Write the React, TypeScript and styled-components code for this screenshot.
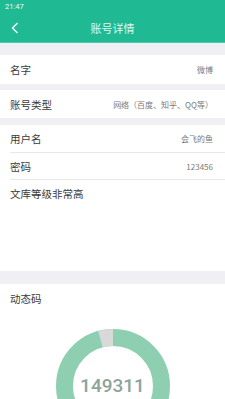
import React from "react";
import styled, { createGlobalStyle } from "styled-components";

const Global = createGlobalStyle`
  html, body { margin: 0; padding: 0; background: #efeff4; }
  body { font-family: Roboto, "Noto Sans CJK SC", sans-serif; width: 225px; height: 399px; overflow: hidden; }
`;

const Page = styled.div`
  display: flex;
  flex-direction: column;
  width: 225px;
  height: 399px;
  background: #efeff4;
  overflow: hidden;
`;

const Top = styled.div`
  background: #1fb994;
  border-bottom: 1px solid #4cc9a9;
`;

const StatusBar = styled.div`
  height: 13px;
  display: flex;
  align-items: center;
  padding-left: 5px;
  color: #e8fff7;
  font-size: 7.5px;
`;

const NavBar = styled.div`
  height: 29px;
  display: flex;
  align-items: center;
  position: relative;
  justify-content: center;
  color: #dff7ef;
  font-size: 11px;
  font-family: "Noto Sans CJK SC", sans-serif;
`;

const Back = styled.div`
  position: absolute;
  left: 10px;
  top: 9px;
  width: 10px;
  height: 12px;
  display: flex;
`;

const Section = styled.div<{ $gap: number }>`
  margin-top: ${(p) => p.$gap}px;
  background: #fff;
  display: flex;
  flex-direction: column;
`;

const Row = styled.div<{ $h: number; $divider?: boolean; $top?: boolean }>`
  height: ${(p) => p.$h}px;
  display: flex;
  justify-content: space-between;
  align-items: ${(p) => (p.$top ? "flex-start" : "center")};
  padding: ${(p) => (p.$top ? "6px 12px 0 10px" : "0 12px 0 10px")};
  box-sizing: border-box;
  border-top: ${(p) => (p.$divider ? "1px solid #e8e8ea" : "none")};
  margin-left: ${(p) => (p.$divider ? "10px" : "0")};
  padding-left: ${(p) => (p.$divider ? "0" : "10px")};
`;

const Label = styled.span`
  font-family: "Noto Sans CJK SC", sans-serif;
  font-size: 10.5px;
  color: #3a3a3a;
`;

const Value = styled.span`
  font-family: "Noto Sans CJK SC", sans-serif;
  font-size: 8px;
  color: #7a7a7a;
`;

const CodeSection = styled.div`
  margin-top: 13px;
  background: #fff;
  flex: 1;
  display: flex;
  flex-direction: column;
  padding: 7px 10px 0;
`;

const RingWrap = styled.div`
  margin: 23px auto 0;
  width: 114px;
  height: 114px;
  position: relative;
  flex-shrink: 0;
`;

const Code = styled.div`
  position: absolute;
  left: 0;
  right: 0;
  top: 45px;
  text-align: center;
  font-family: Roboto, sans-serif;
  font-weight: 500;
  font-size: 19px;
  color: #8fa39b;
`;

function Ring() {
  const cx = 57, cy = 57, r = 48.5;
  const ang = (deg: number) => {
    const a = ((deg - 90) * Math.PI) / 180;
    return [cx + r * Math.cos(a), cy + r * Math.sin(a)];
  };
  const [gx1, gy1] = ang(-15);
  const [gx2, gy2] = ang(0);
  return (
    <svg width="114" height="114" viewBox="0 0 114 114">
      <circle cx={cx} cy={cy} r={r} fill="none" stroke="#8fcfb1" strokeWidth="17" />
      <path d={`M ${gx1} ${gy1} A ${r} ${r} 0 0 1 ${gx2} ${gy2}`} fill="none" stroke="#d9d9d9" strokeWidth="17" />
    </svg>
  );
}

export default function App() {
  return (
    <Page>
      <Global />
      <Top>
        <StatusBar>21:47</StatusBar>
        <NavBar>
          <Back>
            <svg width="10" height="12" viewBox="0 0 10 12">
              <path d="M7 1.5 L2.5 6 L7 10.5" fill="none" stroke="#eafff8" strokeWidth="1.6" strokeLinecap="round" strokeLinejoin="round" />
            </svg>
          </Back>
          账号详情
        </NavBar>
      </Top>
      <Section $gap={12}>
        <Row $h={29}>
          <Label>名字</Label>
          <Value>微博</Value>
        </Row>
      </Section>
      <Section $gap={6}>
        <Row $h={28}>
          <Label>账号类型</Label>
          <Value>网络（百度、知乎、QQ等）</Value>
        </Row>
      </Section>
      <Section $gap={7}>
        <Row $h={27}>
          <Label>用户名</Label>
          <Value>会飞的鱼</Value>
        </Row>
        <Row $h={27} $divider>
          <Label>密码</Label>
          <Value>123456</Value>
        </Row>
        <Row $h={92} $divider $top>
          <Label>文库等级非常高</Label>
        </Row>
      </Section>
      <CodeSection>
        <Label>动态码</Label>
        <RingWrap>
          <Ring />
          <Code>149311</Code>
        </RingWrap>
      </CodeSection>
    </Page>
  );
}
